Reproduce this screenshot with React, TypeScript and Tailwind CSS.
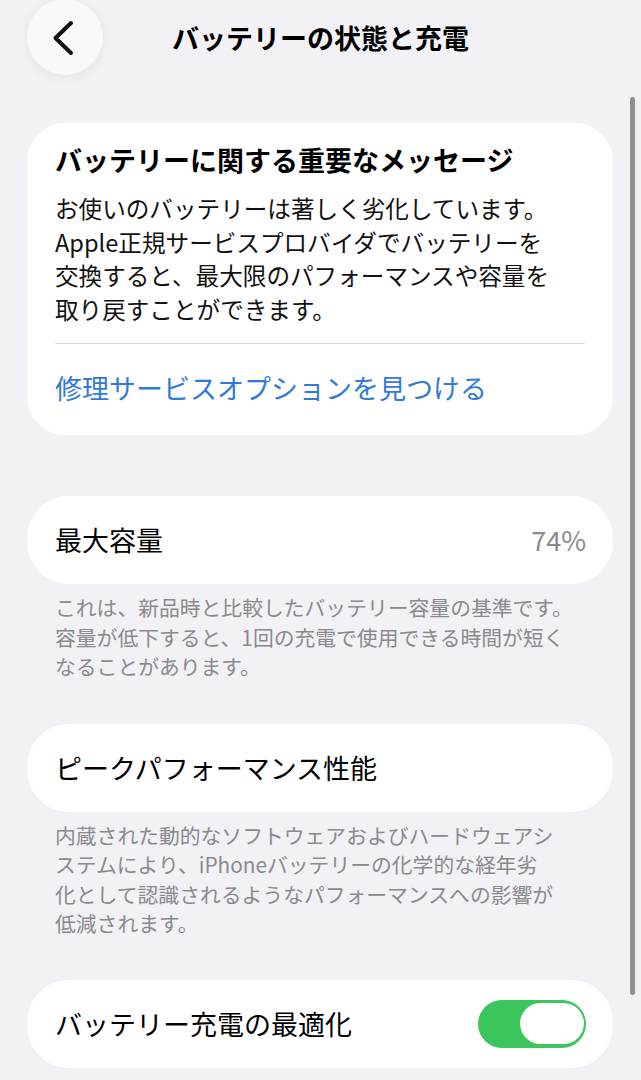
import type { ReactNode } from "react";

const FONT = { fontFamily: '"Noto Sans CJK JP", "Noto Sans", sans-serif' };

function BackButton() {
  return (
    <button
      type="button"
      className="-mt-px flex h-[76px] w-[76px] items-center justify-center rounded-full bg-[#f9f9fb] shadow-[0_2px_14px_rgba(0,0,0,0.06)]"
    >
      <svg width="76" height="76" viewBox="0 0 76 76" fill="none">
        <path
          d="M44 24 L28.5 39 L44 54"
          stroke="#111"
          strokeWidth="4"
          strokeLinecap="round"
          strokeLinejoin="round"
        />
      </svg>
    </button>
  );
}

function Card({ children, className = "" }: { children: ReactNode; className?: string }) {
  return (
    <div className={`mx-[27px] w-[586px] bg-white ${className}`}>{children}</div>
  );
}

function Row({ label, right }: { label: string; right?: ReactNode }) {
  return (
    <Card className="flex h-[88px] items-center justify-between rounded-[42px] pl-[28px] pr-[27px]">
      <span className="text-[27px] leading-[34px] text-black">{label}</span>
      {right}
    </Card>
  );
}

function Footer({ lines }: { lines: string[] }) {
  return (
    <p className="mx-[55px] mt-[9px] whitespace-nowrap text-[20.8px] leading-[29.5px] text-[#8a8a8e]">
      {lines.map((line, idx) => (
        <span key={idx} className="block">
          {line}
        </span>
      ))}
    </p>
  );
}

function Toggle() {
  return (
    <div className="flex h-[48px] w-[108px] items-center justify-end rounded-full bg-[#3bc55b] px-[2px]">
      <div className="h-[41px] w-[64px] rounded-full bg-white" />
    </div>
  );
}

export default function App() {
  return (
    <div className="relative h-[1080px] w-[641px] overflow-hidden bg-[#f2f1f6]" style={FONT}>
      {/* ナビゲーション */}
      <header className="grid h-[75px] grid-cols-[1fr_auto_1fr] items-center">
        <div className="pl-[27px]">
          <BackButton />
        </div>
        <h1 className="m-0 text-[27px] font-semibold leading-[34px] text-black">
          バッテリーの状態と充電
        </h1>
        <div />
      </header>

      {/* 重要なメッセージ */}
      <Card className="mt-[48px] rounded-[38px] px-[28px] pb-[30px] pt-[20px]">
        <h2 className="m-0 text-[27px] font-semibold leading-[34px] text-black">
          バッテリーに関する重要なメッセージ
        </h2>
        <p className="m-0 mt-[15px] whitespace-nowrap text-[23.6px] leading-[33.5px] text-[#111]">
          <span className="block">お使いのバッテリーは著しく劣化しています。</span>
          <span className="block">Apple正規サービスプロバイダでバッテリーを</span>
          <span className="block">交換すると、最大限のパフォーマンスや容量を</span>
          <span className="block">取り戻すことができます。</span>
        </p>
        <div className="mt-[17px] h-px bg-[#dcdce0]" />
        <button
          type="button"
          className="mt-[27px] block text-[27px] leading-[34px] text-[#2f7bd6]"
        >
          修理サービスオプションを見つける
        </button>
      </Card>

      {/* 最大容量 */}
      <div className="mt-[61px]">
        <Row
          label="最大容量"
          right={<span className="text-[27px] leading-[34px] text-[#8a8a8e]">74%</span>}
        />
        <Footer
          lines={[
            "これは、新品時と比較したバッテリー容量の基準です。",
            "容量が低下すると、1回の充電で使用できる時間が短く",
            "なることがあります。",
          ]}
        />
      </div>

      {/* ピークパフォーマンス */}
      <div className="mt-[42px]">
        <Row label="ピークパフォーマンス性能" />
        <Footer
          lines={[
            "内蔵された動的なソフトウェアおよびハードウェアシ",
            "ステムにより、iPhoneバッテリーの化学的な経年劣",
            "化として認識されるようなパフォーマンスへの影響が",
            "低減されます。",
          ]}
        />
      </div>

      {/* 充電の最適化 */}
      <div className="mt-[41px]">
        <Row label="バッテリー充電の最適化" right={<Toggle />} />
      </div>

      {/* スクロールインジケータ */}
      <div className="absolute left-[630px] top-[97px] h-[898px] w-[5px] rounded-full bg-[#8e8e93]" />
    </div>
  );
}
